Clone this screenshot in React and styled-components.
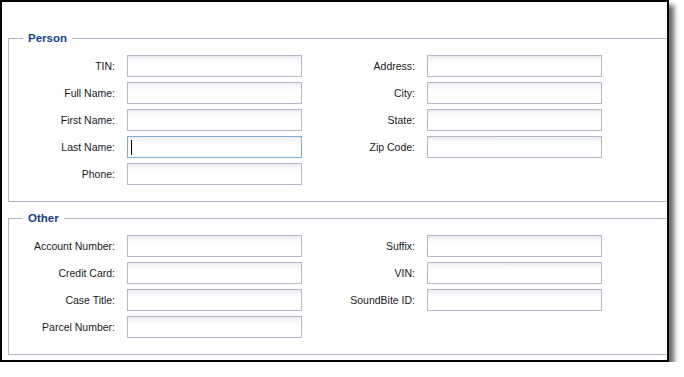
import React from 'react';
import styled, { createGlobalStyle } from 'styled-components';

const GlobalStyle = createGlobalStyle`
    body {
        margin: 0;
        background: #fff;
        font-family: "Liberation Sans", Arial, sans-serif;
    }
`;

const sections = [
    {
        title: 'Person',
        left: ['TIN', 'Full Name', 'First Name', 'Last Name', 'Phone'],
        right: ['Address', 'City', 'State', 'Zip Code'],
    },
    {
        title: 'Other',
        left: ['Account Number', 'Credit Card', 'Case Title', 'Parcel Number'],
        right: ['Suffix', 'VIN', 'SoundBite ID'],
    },
];

const Field = ({ label, focused }) => (
    <>
        <Label>{label}:</Label>
        <InputWrap>
            <TextInput type="text" $focused={focused} />
            {focused && <Caret />}
        </InputWrap>
    </>
);

const App = () => {
    return (
        <>
            <GlobalStyle />
            <Window>
                {sections.map((section) => (
                    <FieldSet key={section.title}>
                        <Legend>{section.title}</Legend>
                        <Columns>
                            <Column>
                                {section.left.map((l) => (
                                    <Field key={l} label={l} focused={l === 'Last Name'} />
                                ))}
                            </Column>
                            <Column>
                                {section.right.map((l) => (
                                    <Field key={l} label={l} />
                                ))}
                            </Column>
                        </Columns>
                    </FieldSet>
                ))}
            </Window>
        </>
    );
};

export default App;

const Window = styled.div`
    box-sizing: border-box;
    width: 669px;
    height: 362px;
    border: 2px solid #000;
    background: #fff;
    overflow: hidden;
    padding: 29px 0 0 6px;
    box-shadow: 5px 5px 5px rgba(0, 0, 0, 0.6);
`;

const FieldSet = styled.fieldset`
    box-sizing: border-box;
    width: calc(100% + 20px);
    margin: 0 0 9px 0;
    border: 1px solid #b5b8c8;
    border-right: 0;
    padding: 10px 0 16px 6px;
    min-width: 0;
`;

const Legend = styled.legend`
    margin-left: 8px;
    padding: 0 5px;
    font-size: 11.5px;
    line-height: 14px;
    font-weight: bold;
    color: #15428b;
`;

const Columns = styled.div`
    display: flex;
    gap: 13px;
    align-items: flex-start;
`;

const Column = styled.div`
    display: grid;
    grid-template-columns: 100px 175px;
    column-gap: 12px;
    row-gap: 5px;
    align-items: center;
`;

const Label = styled.label`
    text-align: right;
    font-size: 10.5px;
    color: #1a1a1a;
    white-space: nowrap;
`;

const InputWrap = styled.div`
    position: relative;
    height: 22px;
`;

const TextInput = styled.input`
    box-sizing: border-box;
    display: block;
    width: 175px;
    height: 22px;
    margin: 0;
    padding: 1px 3px;
    border: 1px solid ${(p) => (p.$focused ? '#7eadd9' : '#b5b8c8')};
    background: linear-gradient(#e9eaee 0, #f6f7f9 3px, #fff 8px);
    outline: none;
    font-size: 11px;
    font-family: "Liberation Sans", Arial, sans-serif;
`;

const Caret = styled.span`
    position: absolute;
    left: 4px;
    top: 4px;
    width: 1px;
    height: 15px;
    background: #000;
`;
